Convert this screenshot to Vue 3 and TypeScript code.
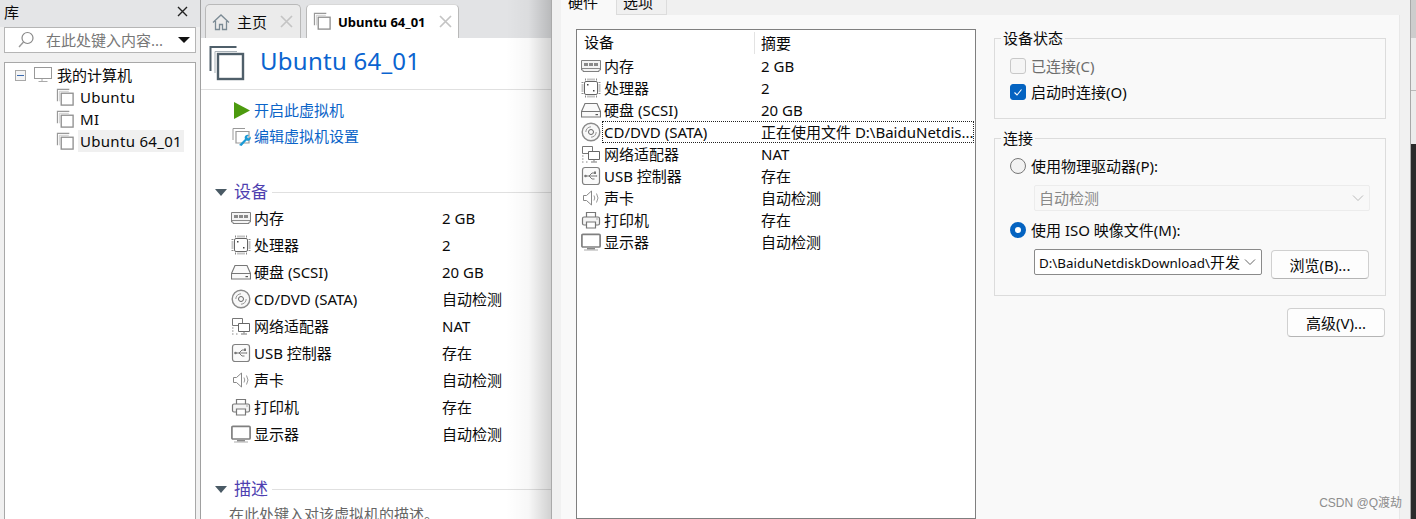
<script setup lang="ts">
interface Row { icon: string; name: string; value: string; detail: string }
const rows: Row[] = [
  { icon: 'mem', name: '内存', value: '2 GB', detail: '2 GB' },
  { icon: 'cpu', name: '处理器', value: '2', detail: '2' },
  { icon: 'disk', name: '硬盘 (SCSI)', value: '20 GB', detail: '20 GB' },
  { icon: 'cd', name: 'CD/DVD (SATA)', value: '自动检测', detail: '正在使用文件 D:\\BaiduNetdis...' },
  { icon: 'net', name: '网络适配器', value: 'NAT', detail: 'NAT' },
  { icon: 'usb', name: 'USB 控制器', value: '存在', detail: '存在' },
  { icon: 'snd', name: '声卡', value: '自动检测', detail: '自动检测' },
  { icon: 'prn', name: '打印机', value: '存在', detail: '存在' },
  { icon: 'mon', name: '显示器', value: '自动检测', detail: '自动检测' },
]
const vms = ['Ubuntu', 'MI', 'Ubuntu 64_01']
</script>

<template>
  <svg class="defs" width="0" height="0" aria-hidden="true">
    <symbol id="i-mem" viewBox="0 0 20 20"><path d="M.5 4.500h19v9.500h-1.500v1.500h-16v-1.500h-1.500z" fill="#f4f4f4" stroke="#808080"/><path d="M3 7h4v3h-4zM8 7h4v3h-4zM13 7h4v3h-4z" fill="#8a8a8a"/><path d="M1 12.500h18" stroke="#8a8a8a"/></symbol>
    <symbol id="i-cpu" viewBox="0 0 20 20"><rect x="3.500" y="3.500" width="13" height="13" rx="1.500" fill="#fff" stroke="#666"/><path d="M4.500 0.500v2M7 0.500v2M9 0.500v2M11 0.500v2M13 0.500v2M15.500 0.500v2M4.500 17.500v2M7 17.500v2M9 17.500v2M11 17.500v2M13 17.500v2M15.500 17.500v2M0.500 4.500h2M0.500 7h2M0.500 9h2M0.500 11h2M0.500 13h2M0.500 15.500h2M17.500 4.500h2M17.500 7h2M17.500 9h2M17.500 11h2M17.500 13h2M17.500 15.500h2" stroke="#8a8a8a"/><path d="M6 6h1.500v1.500H6zM12 12h1.500v1.500H12z" fill="#444"/></symbol>
    <symbol id="i-disk" viewBox="0 0 20 20"><path d="M4 3.500h12l3.500 8v5.500h-19v-5.500z" fill="#fafafa" stroke="#777" stroke-width="1.100"/><path d="M.5 11.500h19" stroke="#777"/><path d="M14.500 14h2.500v1.200h-2.500z" fill="#555"/></symbol>
    <symbol id="i-cd" viewBox="0 0 20 20"><circle cx="10" cy="10" r="8.800" fill="#f8f8f8" stroke="#8a8a8a" stroke-width="1.400"/><circle cx="10" cy="10" r="2.500" fill="none" stroke="#666"/><path d="M4.800 10a5.200 5.200 0 0 1 5.200-5.200" fill="none" stroke="#999"/><path d="M15.200 10a5.200 5.200 0 0 1-5.200 5.200" fill="none" stroke="#999"/></symbol>
    <symbol id="i-net" viewBox="0 0 20 20"><path d="M1.500 2.500h10v7h-10z" fill="#fff" stroke="#777"/><path d="M7.500 7.500h11v8h-11z" fill="#fff" stroke="#666"/><path d="M13 15.500v2M10 18h6" stroke="#777"/><path d="M1 12h1.500M1 15h1.500M1 18h1.500M5 18h1.500" stroke="#888"/></symbol>
    <symbol id="i-usb" viewBox="0 0 20 20"><rect x="1.500" y="1.500" width="17" height="17" rx="2.500" fill="#fafafa" stroke="#808080" stroke-width="1.200"/><path d="M4 10h11M8 10l3-3h2.500M8 10l3 3h2.500" fill="none" stroke="#777"/><circle cx="4.500" cy="10" r="1.300" fill="#777"/><path d="M13 5.500h2v2.500h-2zM15 9l1.500 1-1.500 1z" fill="#777"/></symbol>
    <symbol id="i-snd" viewBox="0 0 20 20"><path d="M2.500 7.500h3l5-4.500v14l-5-4.500h-3z" fill="#fff" stroke="#888"/><path d="M13 7.500q1.500 2.500 0 5M15.500 5.500q3 4.500 0 9" fill="none" stroke="#999"/></symbol>
    <symbol id="i-prn" viewBox="0 0 20 20"><path d="M5.500 7V2.500h9V7" fill="#fff" stroke="#777" stroke-width="1.200"/><rect x="1.500" y="7" width="17" height="8" rx="1.500" fill="#f4f4f4" stroke="#777" stroke-width="1.200"/><path d="M5.500 12h9v6h-9z" fill="#fff" stroke="#777" stroke-width="1.200"/><path d="M15.500 9h1" stroke="#666"/></symbol>
    <symbol id="i-mon" viewBox="0 0 20 20"><rect x=".9" y="2.400" width="18.200" height="12.600" rx="1" fill="#fff" stroke="#808080" stroke-width="1.700"/><path d="M6 16h8v1.500H6z" fill="#888"/><path d="M3 17.500h14v1H3z" fill="#aaa"/></symbol>
    <symbol id="i-vm" viewBox="0 0 20 20"><path d="M1.500 14V1.500h12.500" fill="none" stroke="#999" stroke-width="1.200"/><path d="M3.500 14V3.500h10" fill="none" stroke="#ccc"/><rect x="5.500" y="5.500" width="12.500" height="12.500" fill="#fff" stroke="#8f8f8f" stroke-width="1.400"/></symbol>
  </svg>

  <div class="screen">
    <aside class="library">
      <header class="lib-head">
        <span>库</span>
        <svg width="11" height="11" viewBox="0 0 11 11"><path d="M1 1l9 9M10 1l-9 9" stroke="#222" stroke-width="1.400"/></svg>
      </header>
      <div class="search">
        <svg class="search-ico" width="18" height="18" viewBox="0 0 18 18"><circle cx="10.500" cy="7" r="5.500" fill="none" stroke="#888" stroke-width="1.200"/><path d="M6.500 11l-4.500 5" stroke="#999" stroke-width="1.400"/></svg>
        <span class="search-text">在此处键入内容...</span>
        <span class="search-caret"></span>
      </div>
      <div class="tree">
        <div class="tree-root">
          <span class="expander"></span>
          <svg class="pc" width="18" height="18" viewBox="0 0 18 18"><rect x=".5" y="1.500" width="17" height="11" fill="#fff" stroke="#999"/><path d="M8 13v2.500M4.500 15.500h9" stroke="#aaa"/></svg>
          <span>我的计算机</span>
        </div>
        <div v-for="vm in vms" :key="vm" class="tree-item">
          <svg width="19" height="19"><use href="#i-vm" /></svg>
          <span class="tree-label" :class="{ current: vm === 'Ubuntu 64_01' }">{{ vm }}</span>
        </div>
      </div>
    </aside>

    <main class="main">
      <nav class="tabs">
        <div class="tab home">
          <svg width="18" height="18" viewBox="0 0 18 18"><path d="M1 9.500L9 2l8 7.500M3.500 8v8.500h4v-5h3v5h4V8" fill="none" stroke="#7b8a94" stroke-width="1.300"/></svg>
          <span class="tab-label">主页</span>
          <svg class="tab-x" width="13" height="13" viewBox="0 0 13 13"><path d="M1 1l11 11M12 1L1 12" stroke="#c4c4c4" stroke-width="1.700"/></svg>
        </div>
        <div class="tab active">
          <svg width="19" height="19"><use href="#i-vm" /></svg>
          <b>Ubuntu 64_01</b>
          <svg class="tab-x" width="13" height="13" viewBox="0 0 13 13"><path d="M1 1l11 11M12 1L1 12" stroke="#c4c4c4" stroke-width="1.700"/></svg>
        </div>
      </nav>
      <section class="page">
        <div class="title-row">
          <svg class="title-ico" width="36" height="36" viewBox="0 0 36 36"><path d="M1.500 26V2h26" fill="none" stroke="#4f5f6a" stroke-width="2"/><path d="M6 28V6.500h22" fill="none" stroke="#a9b2b8" stroke-width="1"/><rect x="9" y="9" width="25" height="25" fill="#fff" stroke="#4f5f6a" stroke-width="2.400"/></svg>
          <h1>Ubuntu 64_01</h1>
        </div>
        <div class="actions">
          <div class="action">
            <svg width="19" height="19" viewBox="0 0 19 19"><path d="M2 1l16 8.500L2 18z" fill="#4c9a0e"/></svg>
            <span>开启此虚拟机</span>
          </div>
          <div class="action">
            <svg width="19" height="19" viewBox="0 0 19 19"><path d="M1 13V1.500h12" fill="none" stroke="#999"/><path d="M4 15V4.500h13V16H4z" fill="#fff" stroke="#999" stroke-width="1.200"/><path d="M7 18l6-6a3 3 0 0 1 4-4l-2 2 1.500 1.500 2-2a3 3 0 0 1-4 4l-5 5.500z" fill="#1b9ad6"/></svg>
            <span>编辑虚拟机设置</span>
          </div>
        </div>
        <div class="section">
          <span class="arrow"></span><span class="sec-name">设备</span><span class="sec-line"></span>
        </div>
        <ul class="devices">
          <li v-for="r in rows" :key="r.name">
            <svg width="20" height="20"><use :href="'#i-' + r.icon" /></svg>
            <span class="dev-name">{{ r.name }}</span>
            <span>{{ r.value }}</span>
          </li>
        </ul>
        <div class="section second">
          <span class="arrow"></span><span class="sec-name">描述</span><span class="sec-line"></span>
        </div>
        <p class="desc">在此处键入对该虚拟机的描述。</p>
      </section>
      <div class="shade"></div>
    </main>

    <div class="dialog">
      <div class="dialog-tabs">
        <span class="dtab on">硬件</span>
        <span class="dtab">选项</span>
      </div>
      <div class="dialog-body">
        <div class="list">
          <div class="list-head">
            <span class="head-a">设备</span>
            <span class="head-b">摘要</span>
          </div>
          <div v-for="r in rows" :key="r.name" class="list-row">
            <svg width="20" height="20"><use :href="'#i-' + r.icon" /></svg>
            <div class="list-text" :class="{ focus: r.icon === 'cd' }">
              <span class="list-name">{{ r.name }}</span>
              <span>{{ r.detail }}</span>
            </div>
          </div>
        </div>
        <div class="settings">
          <fieldset class="group status">
            <legend>设备状态</legend>
            <label class="opt disabled"><span class="check"></span>已连接(C)</label>
            <label class="opt second-opt">
              <span class="check on"><svg width="16" height="16" viewBox="0 0 16 16"><path d="M4.500 8.500l2.500 2.500 4.500-5.500" fill="none" stroke="#fff" stroke-width="1.100"/></svg></span>启动时连接(O)
            </label>
          </fieldset>
          <fieldset class="group link">
            <legend>连接</legend>
            <label class="opt"><span class="radio"></span>使用物理驱动器(P):</label>
            <div class="select off">
              <span>自动检测</span>
              <svg width="12" height="8" viewBox="0 0 12 8"><path d="M1 1.500l5 5 5-5" fill="none" stroke="#bbb"/></svg>
            </div>
            <label class="opt iso"><span class="radio on"></span>使用 ISO 映像文件(M):</label>
            <div class="iso-row">
              <div class="select path">
                <span>D:\BaiduNetdiskDownload\<span class="cjk">开发</span></span>
                <svg width="12" height="8" viewBox="0 0 12 8"><path d="M1 1.500l5 5 5-5" fill="none" stroke="#666"/></svg>
              </div>
              <button class="btn" type="button">浏览(B)...</button>
            </div>
          </fieldset>
          <div class="adv"><button class="btn" type="button">高级(V)...</button></div>
        </div>
      </div>
      <span class="mark">CSDN @Q渡劫</span>
    </div>
    <div class="rest">
      <div class="rest-tabs"></div>
      <div class="rest-page"></div>
    </div>
  </div>
</template>

<style>
html, body { margin: 0; background: #fff; overflow: hidden; }
</style>

<style scoped>
.defs { position: absolute; }
.screen {
  width: 1416px; height: 519px; display: flex; overflow: hidden;
  font: 15px/20px "Noto Sans", "Noto Sans CJK SC", sans-serif; color: #0a0a0a;
}
svg { flex: none; display: block; }

.library { width: 201px; flex: none; background: #f0f0f0; border-right: 1px solid #a0a0a0; padding: 0 5px 0 4px; box-sizing: border-box; }
.lib-head { height: 27px; display: flex; align-items: center; justify-content: space-between; background: #e4e5e7; margin: 0 -5px 0 -4px; padding: 0 12px 4px 4px; box-sizing: border-box; }
.search { height: 26px; box-sizing: border-box; border: 1px solid #b5b5b5; background: #fff; display: flex; align-items: center; color: #777; margin-right: -1px; }
.search-ico { margin-left: 12px; }
.search-text { margin-left: 11px; flex: 1; white-space: nowrap; }
.search-caret { border-style: solid; border-color: #111 transparent transparent; border-width: 6px 6px 0; margin-right: 5px; }
.tree { margin-top: 9px; height: 470px; box-sizing: border-box; background: #fff; border: 1px solid #a8a8a8; margin-right: -1px; padding-top: 1px; }
.tree-root { height: 22px; display: flex; align-items: center; padding-left: 10px; }
.expander { width: 9px; height: 9px; border: 1px solid #a8a8a8; margin-right: 8px; background: linear-gradient(#3b6bb0, #3b6bb0) center / 7px 1px no-repeat #f4f4f4; }
.pc { margin-right: 5px; }
.tree-item { height: 22px; display: flex; align-items: center; padding-left: 51px; }
.tree-label { margin-left: 3px; padding: 1px 2px; white-space: nowrap; letter-spacing: .3px; }
.tree-label.current { background: #f0f0f0; }

.main { width: 350px; flex: none; background: #fff; position: relative; overflow: hidden; }
.tabs { height: 38px; box-sizing: border-box; padding: 4px 0 0 4px; background: #e2e3e5; display: flex; gap: 5px; }
.tab { height: 34px; box-sizing: border-box; display: flex; align-items: center; border: 1px solid #b9b9b9; border-bottom: 0; border-radius: 5px 5px 0 0; padding: 0 6px; }
.tab-label { white-space: nowrap; }
.home { width: 96px; background: #ebebeb; gap: 7px; }
.home .tab-x { margin-left: 6px; }
.active { width: 153px; background: #fff; gap: 6px; border-top-color: #d8d8d8; }
.active b { font-size: 13px; font-weight: 700; color: #000; white-space: nowrap; }
.active .tab-x { margin-left: 7px; }
.title-row { height: 51px; box-sizing: content-box; display: flex; align-items: center; gap: 15px; padding-left: 8px; border-bottom: 1px solid #e0e0e0; }
.title-ico { margin-top: -1px; }
.title-row h1 { margin: -5px 0 0; font-weight: 400; font-size: 24px; line-height: 32px; color: #0a64d0; letter-spacing: .25px; }
.actions { padding: 7px 0 0 31px; }
.action { height: 26px; display: flex; align-items: center; gap: 3px; color: #0b64c8; white-space: nowrap; }
.section { display: flex; align-items: center; padding-left: 14px; margin-top: 30px; height: 26px; }
.arrow { border-style: solid; border-color: #4a5a65 transparent transparent; border-width: 7px 6px 0; margin-right: 7px; }
.sec-name { font-size: 17px; color: #4e3fb0; margin-right: 4px; }
.sec-line { flex: 1; border-top: 1px solid #e0e0e0; }
.devices { list-style: none; margin: -1px 0 0; padding: 0 0 0 30px; }
.devices li { height: 27px; display: flex; align-items: center; white-space: nowrap; }
.dev-name { width: 188px; margin-left: 3px; flex: none; }
.second { margin-top: 29px; }
.desc { margin: 2px 0 0 28px; color: #666; white-space: nowrap; }
.shade { position: absolute; top: 0; right: 0; bottom: 0; width: 45px; background: linear-gradient(90deg, rgba(0,0,0,0), rgba(0,0,0,.03) 50%, rgba(0,0,0,.18)); pointer-events: none; }

.dialog { width: 860px; flex: none; position: relative; box-sizing: border-box; background: #f1f1f1; border-left: 1px solid #aaa; border-right: 1px solid #a8a8a8; padding: 0 10px 0 9px; }
.dialog-tabs { height: 15px; display: flex; overflow: hidden; background: #f0f0f0; }
.dtab { width: 50px; height: 15px; box-sizing: border-box; border-right: 1px solid #dcdcdc; border-bottom: 1px solid #dcdcdc; padding-left: 6px; line-height: 0; padding-top: 2px; white-space: nowrap; }
.dtab.on { width: 56px; padding-left: 7px; background: #f9f9f9; border-bottom: 0; }
.dialog-body { height: 504px; box-sizing: border-box; background: #f9f9f9; display: flex; padding: 14px 14px 0 15px; border-right: 1px solid #e8e8e8; }
.list { width: 400px; height: 490px; flex: none; box-sizing: border-box; border: 1px solid #7f7f7f; background: #fff; }
.list-head { height: 25px; display: flex; align-items: center; padding-top: 1px; box-sizing: border-box; }
.head-a { width: 178px; padding-left: 7px; box-sizing: border-box; border-right: 1px solid #e3e3e3; height: 22px; margin-right: 6px; }
.list-row { height: 22px; display: flex; align-items: center; padding-left: 4px; white-space: nowrap; }
.list-text { flex: 1; height: 22px; margin: 0 1px; padding-left: 2px; display: flex; align-items: center; box-sizing: border-box; }
.list-name { width: 157px; flex: none; }
.focus { outline: 1px dotted #222; outline-offset: -1px; }
.settings { width: 392px; flex: none; margin-left: 18px; }
.group { margin: 0; padding: 0 0 0 15px; border: 1px solid #dcdcdc; box-sizing: border-box; min-width: 0; }
.group legend { padding: 0 2px; margin-left: -9px; line-height: 20px; }
.status { height: 91px; margin-top: -1px; padding-top: 10px; }
.link { height: 168px; margin-top: 9px; padding-top: 8px; }
.opt { display: flex; align-items: center; height: 20px; gap: 5px; }
.disabled { color: #6d6d6d; margin-top: -2px; }
.second-opt { margin-top: 6px; }
.check { width: 16px; height: 16px; box-sizing: border-box; border: 1px solid #c8c8c8; border-radius: 3px; background: #f5f5f5; }
.check.on { background: #0463c1; border-color: #0463c1; }
.check.on svg { margin: -1px; }
.radio { width: 16px; height: 16px; box-sizing: border-box; border: 1px solid #777; border-radius: 50%; background: #f2f2f2; }
.radio.on { border: 5px solid #0463c1; background: #fff; }
.select { box-sizing: border-box; display: flex; align-items: center; justify-content: space-between; padding: 0 5px 0 4px; border-radius: 2px; white-space: nowrap; }
.off { width: 336px; height: 26px; margin: 9px 0 0 24px; border: 1px solid #ececec; color: #888; background: #f8f8f8; }
.iso { margin-top: 9px; }
.iso-row { display: flex; margin: 9px 0 0 24px; }
.path { width: 228px; height: 26px; border: 1px solid #8a8a8a; background: #fff; font-size: 13.4px; }
.cjk { font-size: 15px; }
.btn { font: inherit; color: #0a0a0a; width: 98px; height: 29px; box-sizing: border-box; padding: 0; background: #fdfdfd; border: 1px solid #d0d0d0; border-bottom-color: #b5b5b5; border-radius: 4px; }
.iso-row .btn { margin: 1px 0 0 9px; }
.adv { display: flex; justify-content: flex-end; margin-top: 12px; padding-right: 1px; }
.mark { position: absolute; right: 8px; bottom: 8px; font: 12px/16px "Liberation Sans", "Noto Sans CJK SC", sans-serif; color: #8d8d8d; }
.rest { flex: 1; background: #2b2b2b; }
.rest-tabs { height: 38px; background: #cdcdcd; }
.rest-page { height: 106px; box-sizing: border-box; background: linear-gradient(#b9b9b9, #b9b9b9) 0 52px / 100% 1px no-repeat #ececec; }
</style>
